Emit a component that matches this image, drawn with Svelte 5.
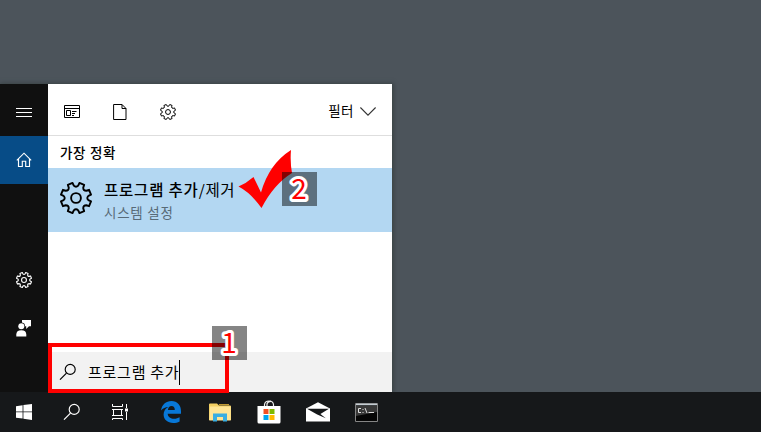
<script>
  function gearPath(outer, base, valley) {
    const point = (deg, r) => {
      const a = ((deg - 90) * Math.PI) / 180;
      return `${(16 + r * Math.cos(a)).toFixed(2)} ${(16 + r * Math.sin(a)).toFixed(2)}`;
    };
    let d = '';
    for (let i = 0; i < 8; i++) {
      const mid = 22.5 + i * 45;
      d += `${i ? 'L' : 'M'}${point(mid - 9.5, outer)}L${point(mid + 9.5, outer)}L${point(mid + 12.5, base)}Q${point(mid + 22.5, valley)} ${point(mid + 32.5, base)}`;
    }
    return d + 'Z';
  }
  const gear = gearPath(15.4, 12.6, 10.2);
</script>

{#snippet gearIcon(size, stroke)}
  <svg width={size} height={size} viewBox="0 0 32 32" fill="none" stroke="currentColor" stroke-width={stroke} stroke-linejoin="round">
    <path d={gear} /><circle cx="16" cy="16" r="4.9" />
  </svg>
{/snippet}

{#snippet searchIcon()}
  <svg width="18" height="18" viewBox="0 0 18 18" fill="none" stroke="currentColor" stroke-width="1.15">
    <circle cx="11.2" cy="6.4" r="5" /><path d="M7.5 10.1L1 16.6" />
  </svg>
{/snippet}

{#snippet digit(n)}
  <svg width="35" height="34" viewBox="0 0 35 34"><text x="17" y="26.5" text-anchor="middle">{n}</text></svg>
{/snippet}

<main class="desktop">
  <section class="start">
    <nav class="rail">
      <div class="cell">
        <svg width="16" height="10" viewBox="0 0 16 10" stroke="#fff"><path d="M0 .5h16M0 4.5h16M0 8.5h16" /></svg>
      </div>
      <div class="cell active">
        <svg width="16" height="16" viewBox="0 0 16 16" fill="none" stroke="#fff" stroke-width="1.15"><path d="M.8 8.3L8 1.2l7.2 7.1M2.5 6.8v7.7h3.8V9.2h3.4v5.3h3.8V6.8" /></svg>
      </div>
      <div class="spacer"></div>
      <div class="cell">{@render gearIcon(16, 2.2)}</div>
      <div class="cell feedback">
        <svg width="16" height="17" viewBox="0 0 16 17" fill="#fff"><path d="M6 0h9v6.3h-2L10.2 9V6.3H9C9 3.8 8 2.7 6 2.4Z" /><circle cx="5.3" cy="6.2" r="3" /><path d="M.3 16.5v-2C.3 11.8 2 10.3 5.3 10.3s5 1.5 5 4.2v2Z" /></svg>
      </div>
    </nav>
    <div class="content">
      <header>
        <svg width="16" height="14" viewBox="0 0 16 14" fill="none" stroke="#000"><path d="M.5.5h15v12H.5zM.5 3.5h15M2.500 5.500h4v5h-4zM8 6.500h4.500M8 8.500h3M8 10.500h2" /></svg>
        <svg class="doc" width="14" height="16" viewBox="0 0 14 16" fill="none" stroke="#000"><path d="M.6.5H9l4 4v11H.6zM9 .5v4h4" /></svg>
        <span class="small-gear">{@render gearIcon(16, 2)}</span>
        <span class="filter">필터</span>
        <svg width="16" height="9" viewBox="0 0 16 9" fill="none" stroke="#333" stroke-width="1.1"><path d="M.4.5L8 8.1 15.6.5" /></svg>
      </header>
      <h2>가장 정확</h2>
      <div class="result">
        {@render gearIcon(32, 1.9)}
        <div class="labels">
          <div class="title"><b>프로그램 추가</b>/제거</div>
          <div class="sub">시스템 설정</div>
        </div>
      </div>
      <div class="blank"></div>
      <div class="search">
        {@render searchIcon()}
        <span class="query">프로그램 추가</span><i class="caret"></i>
      </div>
    </div>
  </section>

  <footer>
    <div class="cell">
      <svg width="16" height="16" viewBox="0 0 16 16" fill="#fff"><path d="M0 2.2L6.6 1.2v6.2H0zM7.4 1.1L16 0v7.4H7.4zM0 8.3h6.6v6.3L0 13.7zM7.4 8.3H16V16l-8.6-1.2z" /></svg>
    </div>
    <div class="cell white">{@render searchIcon()}</div>
    <div class="cell">
      <svg width="16" height="16" viewBox="0 0 16 16" fill="none" stroke="#fff"><path d="M.5 0v2.500h10V0M1.500 5.500h8v6h-8zM0 5.500h11M0 11.500h11M.5 16v-1.500h10V16M14.500 0v4M14.500 8v8" /><path d="M13 4.500h3v3h-3z" fill="#fff" stroke="none" /></svg>
    </div>
    <div class="cell app first">
      <svg width="20" height="22" viewBox="0 0 20 22" fill="#0878d8"><path d="M0 9.6C.8 3.5 5 0 10.4 0 16.5 0 20 4.3 20 10.2v2.5H6.7c.2 3.4 3 5 6.4 5 2.1 0 4-.6 5.5-1.5v4.3c-1.9 1-4 1.500-6.400 1.500C6.500 22 2.600 18.700 2.600 13.600c0-3.500 1.800-6.200 4.800-7.700C4.500 6 1.800 7.200 0 9.600Zm6.900-.7h6.900c0-2.400-1.100-3.800-3.300-3.800-2 0-3.200 1.400-3.600 3.800Z" /></svg>
    </div>
    <div class="cell app">
      <svg width="22" height="19" viewBox="0 0 22 19"><path d="M0 1.5Q0 .5 1 .5h7l2 2h11q1 0 1 1V17H0Z" fill="#f3cf62" /><path d="M1 3.5h20.7v14H.3Z" fill="#ffe596" /><path d="M10 1.7h10" stroke="#e8b83d" /><path d="M4 18.5v-8h14v8h-4V14H8v4.5Z" fill="#39aee2" /></svg>
    </div>
    <div class="cell app">
      <svg width="24" height="24" viewBox="0 0 24 24"><path d="M7.5 7V4.5Q8 1 12 1t4.5 3.5V7M10 6V3.8Q11 1.4 14 1.4" fill="none" stroke="#eee" stroke-width="1.2" /><path d="M.5 6h23v16q0 1.5-1.5 1.5H2Q.5 23.5.5 22Z" fill="#fff" /><path d="M6.500 9h5v5h-5z" fill="#f25022" /><path d="M12.500 9h5v5h-5z" fill="#7fba00" /><path d="M6.500 15h5v5h-5z" fill="#00a4ef" /><path d="M12.500 15h5v5h-5z" fill="#ffb900" /></svg>
    </div>
    <div class="cell app">
      <svg width="24" height="20" viewBox="0 0 24 20"><path d="M0 6.500L12 .3l12 6.200v13H0Z" fill="#fff" /><path d="M1 6.800h22l-8.600 5.200 5.400 4.300-8.600-3.900Z" fill="#151719" /></svg>
    </div>
    <div class="cell app">
      <svg width="23" height="19" viewBox="0 0 23 19"><path d="M.5.5h22v18H.5z" fill="#050505" stroke="#858585" /><path d="M1 3h21v6L1 13Z" fill="#383838" /><path d="M1 1.500h21" stroke="#c4ccd2" stroke-width="1.600" /><path d="M6 5.500H3.500v4H6M8 6v1M8 9v1M10 5l2 5M13.500 9.500H19" fill="none" stroke="#ddd" /></svg>
    </div>
  </footer>

  <div class="outline"></div>
  <svg class="check" width="54" height="60" viewBox="0 0 54 60"><path d="M.5 36.500Q8 33.500 15.500 27L23 42.500Q31 14 53 0 52 12 54 23 36 34 23.500 58 13 43 .5 36.500Z" fill="#f00" /></svg>
  <div class="badge one">{@render digit(1)}</div>
  <div class="badge two">{@render digit(2)}</div>
</main>

<style>
  :global(body) { margin: 0; }
  .desktop { position: relative; width: 761px; height: 432px; overflow: hidden; background: #4c545b; display: flex; flex-direction: column; justify-content: flex-end; font-family: "Noto Sans CJK KR", "Noto Sans", sans-serif; color: #000; }
  svg { display: block; flex: none; }
  .start { width: 392px; height: 308px; display: flex; box-shadow: 1px 0 4px 1px #3b4446; }
  .rail { width: 48px; background: #101010; display: flex; flex-direction: column; color: #fff; }
  .cell { width: 48px; height: 48px; display: flex; align-items: center; justify-content: center; }
  .rail .cell:first-child { height: 52px; padding-top: 5px; box-sizing: border-box; }
  .active { background: #074c87; }
  .spacer { height: 72px; }
  .content { flex: 1; display: flex; flex-direction: column; background: #fff; }
  header { height: 52px; box-sizing: border-box; border-bottom: 1px solid #dedede; padding: 4px 16px 0; display: flex; align-items: center; }
  .doc { margin-left: 33px; }
  .small-gear { margin-left: 33px; }
  .filter { margin-left: auto; margin-right: 6px; font-size: 13.5px; line-height: 18px; letter-spacing: .5px; padding-bottom: 3px; }
  h2 { height: 32px; margin: 0; padding-left: 12px; font-size: 13.5px; line-height: 33px; font-weight: 500; letter-spacing: .7px; }
  .result { height: 64px; background: #b3d7f2; display: flex; align-items: center; padding-left: 12px; box-sizing: border-box; padding-bottom: 4px; }
  .labels { margin-left: 12px; padding-top: 6px; }
  .title { font-size: 15.5px; line-height: 23px; white-space: nowrap; letter-spacing: .65px; }
  .title b { font-weight: 500; letter-spacing: .8px; }
  .sub { font-size: 13.5px; line-height: 23px; color: #586a77; letter-spacing: .75px; }
  .blank { flex: 1; }
  .search { height: 40px; box-sizing: border-box; background: #f2f2f2; display: flex; align-items: center; padding-left: 11px; }
  .query { margin-left: 11px; font-size: 15px; letter-spacing: .75px; padding-bottom: 2px; }
  .caret { width: 1px; height: 25px; background: #000; }
  footer { height: 40px; background: #16181a; display: flex; }
  footer .cell { height: 40px; }
  footer .app { width: 49px; }
  footer .first { margin-left: 2px; }
  .white { color: #fff; }
  .outline { position: absolute; left: 48px; top: 343px; width: 181px; height: 50px; box-sizing: border-box; border: 4px solid #f00; }
  .check { position: absolute; left: 238px; top: 150px; }
  .badge { position: absolute; width: 35px; height: 34px; background: rgba(0, 0, 0, .48); }
  .badge svg { overflow: visible; }
  .badge text { font: 400 28px "Noto Sans CJK KR", sans-serif; fill: #f00; stroke: #fff; stroke-width: 6px; paint-order: stroke fill; stroke-linejoin: round; }
  .one { left: 212px; top: 326px; }
  .two { left: 282px; top: 172px; }
</style>
